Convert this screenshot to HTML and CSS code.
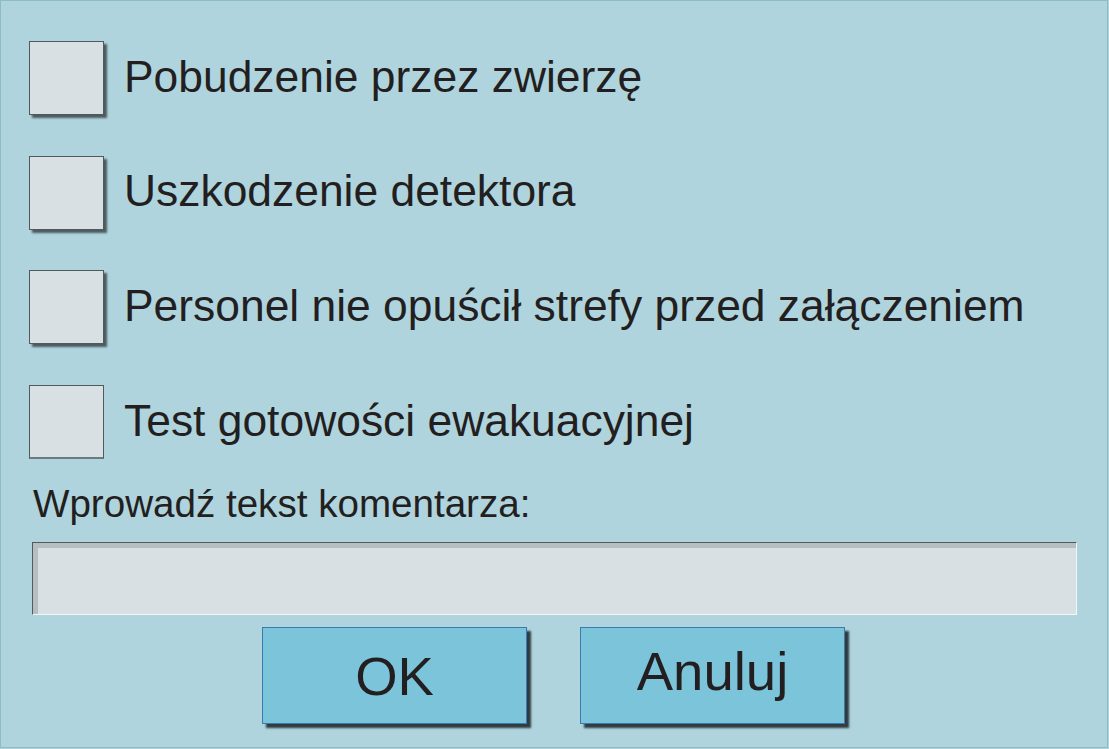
FILE: index.html
```html
<!DOCTYPE html>
<html lang="pl">
  <head>
    <meta charset="UTF-8" />
    <meta name="viewport" content="width=device-width, initial-scale=1.0" />
    <title>Komentarz alarmu</title>
    <link rel="stylesheet" href="styles.css">
  </head>
  <body>
    <div class="dialog">
      <div class="options">
        <label class="option">
          <span class="check"></span>
          <span class="option-text">Pobudzenie przez zwierzę</span>
        </label>
        <label class="option">
          <span class="check"></span>
          <span class="option-text">Uszkodzenie detektora</span>
        </label>
        <label class="option">
          <span class="check"></span>
          <span class="option-text">Personel nie opuścił strefy przed załączeniem</span>
        </label>
        <label class="option">
          <span class="check flat"></span>
          <span class="option-text">Test gotowości ewakuacyjnej</span>
        </label>
      </div>

      <div class="comment-label">Wprowadź tekst komentarza:</div>
      <input type="text" class="comment" />

      <div class="buttons">
        <button class="btn btn-ok">OK</button>
        <button class="btn btn-cancel">Anuluj</button>
      </div>
    </div>
  </body>
</html>
```

FILE: styles.css
```css
body {
  margin: 0;
  font-family: "Liberation Sans", Arial, sans-serif;
  color: #231f20;
  background: #afd4de;
}

.dialog {
  box-sizing: border-box;
  width: 1108px;
  height: 748px;
  border: 1px solid #8bbcc8;
  background: #afd4de;
  padding: 40px 0 0 28px;
}

.options {
  display: flex;
  flex-direction: column;
  gap: 40.7px;
}

.option {
  display: flex;
  align-items: center;
  gap: 20px;
  height: 74px;
}

.check {
  box-sizing: border-box;
  width: 75px;
  height: 74px;
  border: 1px solid #50595c;
  background: #d8e0e3;
  box-shadow: 3px 3px 2px #4d5a5e;
  flex-shrink: 0;
}

.check.flat {
  box-shadow: none;
  border-bottom: 2px solid #6d7b7f;
}

.option-text {
  font-size: 44.4px;
  line-height: 1;
  padding-bottom: 2px;
}

.comment-label {
  font-size: 38.6px;
  line-height: 1;
  margin: 26px 0 0 4px;
}

.comment {
  display: block;
  box-sizing: border-box;
  width: 1045px;
  height: 73px;
  margin: 18px 0 0 3px;
  border-top: 1px solid #55595a;
  border-left: 1px solid #55595a;
  border-right: 1px solid #f4f7f8;
  border-bottom: 1px solid #f4f7f8;
  background: #d8e0e3;
  box-shadow: inset 5px 5px 0 #b5bec1;
  outline: none;
  font-family: inherit;
  font-size: 36px;
  padding: 0 12px;
}

.buttons {
  display: flex;
  gap: 53px;
  margin: 12px 0 0 233px;
}

.btn {
  box-sizing: border-box;
  width: 265px;
  height: 97px;
  border: 1px solid #3b7ab0;
  background: #7bc4da;
  box-shadow: 4px 4px 2px #2f3b40;
  font-family: inherit;
  font-size: 54.5px;
  line-height: 1;
  color: #231f20;
  padding: 0;
  cursor: pointer;
}

.btn-ok {
  padding-top: 4px;
}

.btn-cancel {
  padding-bottom: 6px;
}
```
